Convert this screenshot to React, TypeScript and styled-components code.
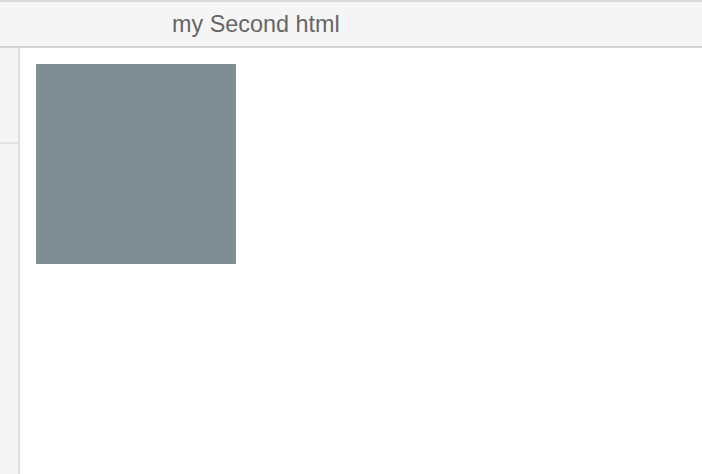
import React from "react";
import styled, { createGlobalStyle } from "styled-components";

const GlobalStyle = createGlobalStyle`
  html, body {
    margin: 0;
    padding: 0;
    background: #ffffff;
  }
`;

const StyledWindow = styled.div`
  display: flex;
  flex-direction: column;
  width: 702px;
  height: 474px;
  overflow: hidden;
  border-top: 2px solid #d8d8d8;
  box-sizing: border-box;
`;

const StyledTitleBar = styled.div`
  display: flex;
  align-items: center;
  height: 44px;
  padding-left: 172px;
  background: #f5f5f5;
  border-bottom: 2px solid #d3d3d3;
  font-family: "Liberation Sans", Arial, sans-serif;
  font-size: 23.4px;
  color: #666666;
  flex-shrink: 0;
`;

const StyledBody = styled.div`
  display: flex;
  flex: 1;
`;

const StyledSidebar = styled.div`
  width: 18px;
  background: #f5f5f5;
  border-right: 2px solid #dedede;
  flex-shrink: 0;
`;

const StyledSidebarSection = styled.div`
  height: 94px;
  border-bottom: 2px solid #e2e2e2;
`;

const StyledContent = styled.div`
  flex: 1;
  padding: 16px;
`;

const StyledBox = styled.div`
  width: 200px;
  height: 200px;
  background: #818d94;
`;

const App: React.FC = () => {
  return (
    <>
      <GlobalStyle />
      <StyledWindow>
        <StyledTitleBar>my Second html</StyledTitleBar>
        <StyledBody>
          <StyledSidebar>
            <StyledSidebarSection />
          </StyledSidebar>
          <StyledContent>
            <StyledBox />
          </StyledContent>
        </StyledBody>
      </StyledWindow>
    </>
  );
};

export default App;
